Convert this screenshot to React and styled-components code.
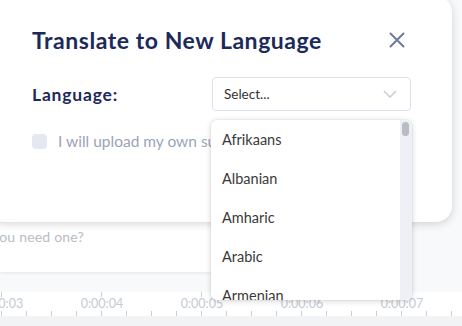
import styled, { createGlobalStyle } from 'styled-components';

const GlobalStyle = createGlobalStyle`
  html, body {
    margin: 0;
    padding: 0;
    background: #f8f9fa;
    font-family: Lato, 'Liberation Sans', sans-serif;
  }
`;

const languages = ['Afrikaans', 'Albanian', 'Amharic', 'Arabic', 'Armenian', 'Azerbaijani'];
const seconds = ['0:00:03', '0:00:04', '0:00:05', '0:00:06', '0:00:07', '0:00:08'];

const App = () => {
  return (
    <Page>
      <GlobalStyle />
      {/* background editor */}
      <Card>
        <Hint>you need one?</Hint>
      </Card>
      <Gap />
      <Timeline>
        {seconds.map((s) => (
          <Second key={s}>{s}</Second>
        ))}
      </Timeline>
      <Footer />

      {/* MODAL */}
      <Modal>
        <Header>
          <Title>Translate to New Language</Title>
          <Close aria-label="close">
            <svg width="16" height="16" viewBox="0 0 16 16">
              <path d="M1.5 1.5 L14.5 14.5 M14.5 1.5 L1.5 14.5" stroke="#6f7c97" strokeWidth="2" strokeLinecap="round" />
            </svg>
          </Close>
        </Header>
        <Row>
          <Label>Language:</Label>
          <SelectWrap>
            <SelectBox>
              <span>Select...</span>
              <svg width="14" height="8" viewBox="0 0 14 8">
                <path d="M1 1 L7 7 L13 1" stroke="#c8ccd4" strokeWidth="1.5" fill="none" />
              </svg>
            </SelectBox>
            <Menu>
              <Options>
                {languages.map((l) => (
                  <Option key={l}>{l}</Option>
                ))}
              </Options>
              <Track>
                <Thumb />
              </Track>
            </Menu>
          </SelectWrap>
        </Row>
        <CheckRow>
          <Check />
          <CheckLabel>I will upload my own subtitles</CheckLabel>
        </CheckRow>
      </Modal>
    </Page>
  );
};
export default App;

const Page = styled.div`
  position: relative;
  width: 462px;
  height: 326px;
  overflow: hidden;
  display: flex;
  flex-direction: column;
`;

const Card = styled.div`
  width: 410px;
  height: 272px;
  flex-shrink: 0;
  background: #fff;
  box-shadow: 0 1px 3px rgba(0, 0, 0, 0.08);
  display: flex;
  flex-direction: column;
  justify-content: flex-end;
  padding-bottom: 27px;
  box-sizing: border-box;
`;

const Hint = styled.p`
  margin: 0 0 0 -8px;
  font-size: 14px;
  line-height: 16px;
  letter-spacing: 0.2px;
  color: #b8bdc7;
`;

const Gap = styled.div`
  height: 20px;
  flex-shrink: 0;
`;

const Timeline = styled.div`
  height: 24px;
  flex-shrink: 0;
  background-color: #fff;
  background-image:
    repeating-linear-gradient(90deg, #c9cdd4 0 1px, transparent 1px 100px),
    repeating-linear-gradient(90deg, #c9cdd4 0 1px, transparent 1px 25px);
  background-size: 100% 5px, 100% 5px;
  background-position: 1px 0, 1px 19px;
  background-repeat: no-repeat;
  display: flex;
  padding-left: 2px;
`;

const Second = styled.span`
  flex: 0 0 100px;
  margin-left: -50px;
  margin-right: 50px;
  text-align: center;
  font-size: 12.5px;
  line-height: 24px;
  color: #c6cad3;
`;

const Footer = styled.div`
  flex: 1;
  background: #f2f3f5;
`;

const Modal = styled.div`
  position: absolute;
  left: -12px;
  top: -4px;
  width: 464px;
  height: 226px;
  box-sizing: border-box;
  padding: 26px 41px 0 44px;
  background: #fff;
  border-radius: 16px;
  box-shadow: 0 2px 8px rgba(0, 0, 0, 0.16);
  display: flex;
  flex-direction: column;
`;

const Header = styled.div`
  height: 36px;
  display: flex;
  align-items: center;
  justify-content: space-between;
`;

const Title = styled.h2`
  margin: 0;
  font-size: 23px;
  font-weight: 700;
  color: #1c2a5a;
  letter-spacing: 0.55px;
`;

const Close = styled.button`
  border: none;
  background: transparent;
  padding: 0;
  margin-right: 6px;
  width: 16px;
  height: 16px;
  display: flex;
  cursor: pointer;
`;

const Row = styled.div`
  margin-top: 19px;
  display: grid;
  grid-template-columns: 180px 199px;
  align-items: center;
`;

const Label = styled.label`
  font-size: 17.5px;
  font-weight: 700;
  color: #1c2a5a;
  letter-spacing: 0.8px;
`;

const SelectWrap = styled.div`
  position: relative;
`;

const SelectBox = styled.div`
  height: 34px;
  box-sizing: border-box;
  border: 1px solid #dde2ec;
  border-radius: 4px;
  padding: 0 13px 0 11px;
  display: flex;
  align-items: center;
  justify-content: space-between;
  font-size: 13.5px;
  color: #333;
`;

const Menu = styled.div`
  position: absolute;
  top: 43px;
  left: -1px;
  width: 201px;
  height: 180px;
  background: #fff;
  border-radius: 6px;
  box-shadow: 0 1px 6px rgba(0, 0, 0, 0.16), 0 0 0 1px rgba(0, 0, 0, 0.03);
  overflow: hidden;
  display: flex;
  z-index: 2;
`;

const Options = styled.ul`
  flex: 1;
  margin: 0;
  padding: 0;
  list-style: none;
`;

const Option = styled.li`
  height: 39px;
  padding-left: 11px;
  display: flex;
  align-items: center;
  font-size: 14.5px;
  color: #3a3a3a;
`;

const Track = styled.div`
  width: 12px;
  background: #eef0f5;
  padding: 2px 2px 0 2px;
  box-sizing: border-box;
`;

const Thumb = styled.div`
  width: 7px;
  height: 14px;
  border-radius: 4px;
  background: #b9bcc3;
`;

const CheckRow = styled.div`
  margin-top: 20px;
  height: 20px;
  display: flex;
  align-items: center;
  gap: 11px;
`;

const Check = styled.span`
  width: 15px;
  height: 15px;
  border-radius: 4px;
  background: #e3e8f1;
`;

const CheckLabel = styled.span`
  font-size: 15.5px;
  color: #9aa4b8;
  white-space: nowrap;
`;
